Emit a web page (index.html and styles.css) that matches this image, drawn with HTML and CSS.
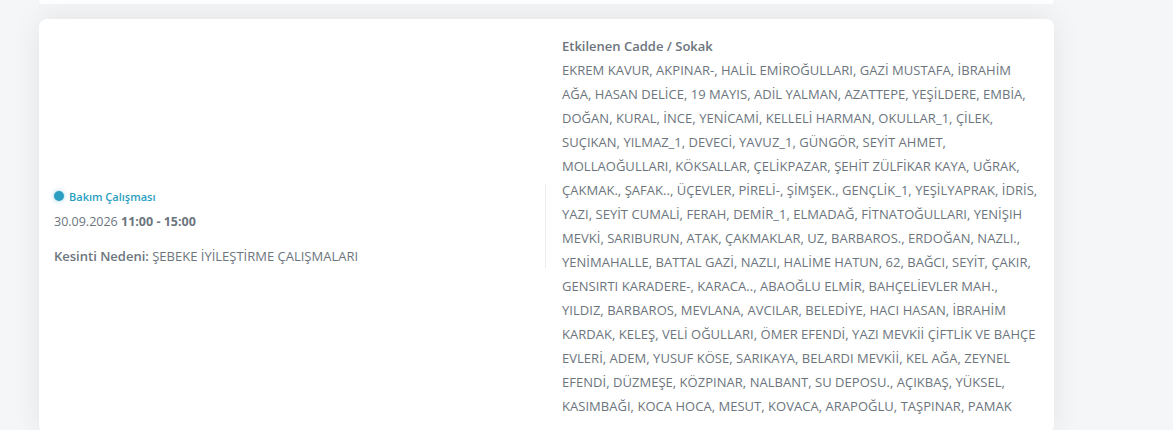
FILE: index.html
```html
<!DOCTYPE html>
<html lang="tr">
<head>
<meta charset="utf-8">
<link rel="stylesheet" href="styles.css">
</head>
<body>
<div class="page">
  <div class="card card-top"></div>
  <div class="card outage">
    <div class="info">
      <div class="badge"><span class="dot"></span><span class="badge-text">Bakım Çalışması</span></div>
      <div class="date">30.09.2026 <strong>11:00 - 15:00</strong></div>
      <div class="reason"><strong>Kesinti Nedeni:</strong> ŞEBEKE İYİLEŞTİRME ÇALIŞMALARI</div>
    </div>
    <div class="streets">
      <div class="streets-title">Etkilenen Cadde / Sokak</div>
      <div class="streets-list">EKREM KAVUR, AKPINAR-, HALİL EMİROĞULLARI, GAZİ MUSTAFA, İBRAHİM AĞA, HASAN DELİCE, 19 MAYIS, ADİL YALMAN, AZATTEPE, YEŞİLDERE, EMBİA, DOĞAN, KURAL, İNCE, YENİCAMİ, KELLELİ HARMAN, OKULLAR_1, ÇİLEK, SUÇIKAN, YILMAZ_1, DEVECİ, YAVUZ_1, GÜNGÖR, SEYİT AHMET, MOLLAOĞULLARI, KÖKSALLAR, ÇELİKPAZAR, ŞEHİT ZÜLFİKAR KAYA, UĞRAK, ÇAKMAK., ŞAFAK.., ÜÇEVLER, PİRELİ-, ŞİMŞEK., GENÇLİK_1, YEŞİLYAPRAK, İDRİS, YAZI, SEYİT CUMALİ, FERAH, DEMİR_1, ELMADAĞ, FİTNATOĞULLARI, YENİŞIH MEVKİ, SARIBURUN, ATAK, ÇAKMAKLAR, UZ, BARBAROS., ERDOĞAN, NAZLI., YENİMAHALLE, BATTAL GAZİ, NAZLI, HALİME HATUN, 62, BAĞCI, SEYİT, ÇAKIR, GENSIRTI KARADERE-, KARACA.., ABAOĞLU ELMİR, BAHÇELİEVLER MAH., YILDIZ, BARBAROS, MEVLANA, AVCILAR, BELEDİYE, HACI HASAN, İBRAHİM KARDAK, KELEŞ, VELİ OĞULLARI, ÖMER EFENDİ, YAZI MEVKİİ ÇİFTLİK VE BAHÇE EVLERİ, ADEM, YUSUF KÖSE, SARIKAYA, BELARDI MEVKİİ, KEL AĞA, ZEYNEL EFENDİ, DÜZMEŞE, KÖZPINAR, NALBANT, SU DEPOSU., AÇIKBAŞ, YÜKSEL, KASIMBAĞI, KOCA HOCA, MESUT, KOVACA, ARAPOĞLU, TAŞPINAR, PAMAK</div>
    </div>
  </div>
</div>
</body>
</html>
```

FILE: styles.css
```css
html, body {
  margin: 0;
  padding: 0;
  background: #f5f6f8;
  font-family: "Open Sans", "Liberation Sans", sans-serif;
  color: #6c757d;
  font-size: 13px;
}

.page {
  width: 1015px;
  margin-left: 39px;
  display: flex;
  flex-direction: column;
  gap: 15px;
}

.card {
  background: #ffffff;
  border-radius: 8px;
  box-shadow: 0 0 30px rgba(0, 0, 0, 0.08);
}

.card-top {
  height: 4px;
  border-radius: 0 0 8px 8px;
}

.outage {
  display: flex;
  align-items: center;
  padding: 15px;
}

.info {
  width: 492px;
  flex-shrink: 0;
  box-sizing: border-box;
  border-right: 1px solid #ececec;
}

.badge {
  display: flex;
  align-items: center;
  gap: 5px;
  height: 26px;
  padding-bottom: 2px;
  box-sizing: border-box;
}

.dot {
  width: 10px;
  height: 10px;
  border-radius: 50%;
  background: #2a9ec1;
  box-shadow: 0 0 4px rgba(42, 158, 193, 0.5);
}

.badge-text {
  font-size: 11px;
  font-weight: 600;
  color: #2a9ec1;
}

.date {
  font-size: 12.5px;
  line-height: 24px;
  margin-bottom: 10px;
}

.reason {
  line-height: 24px;
}

strong {
  font-weight: 600;
}

.date strong {
  font-weight: 700;
}

.streets {
  flex: 1;
  padding-left: 16px;
}

.streets-title {
  font-weight: 600;
  line-height: 24px;
}

.streets-list {
  line-height: 24px;
  letter-spacing: 0.03px;
}
```
